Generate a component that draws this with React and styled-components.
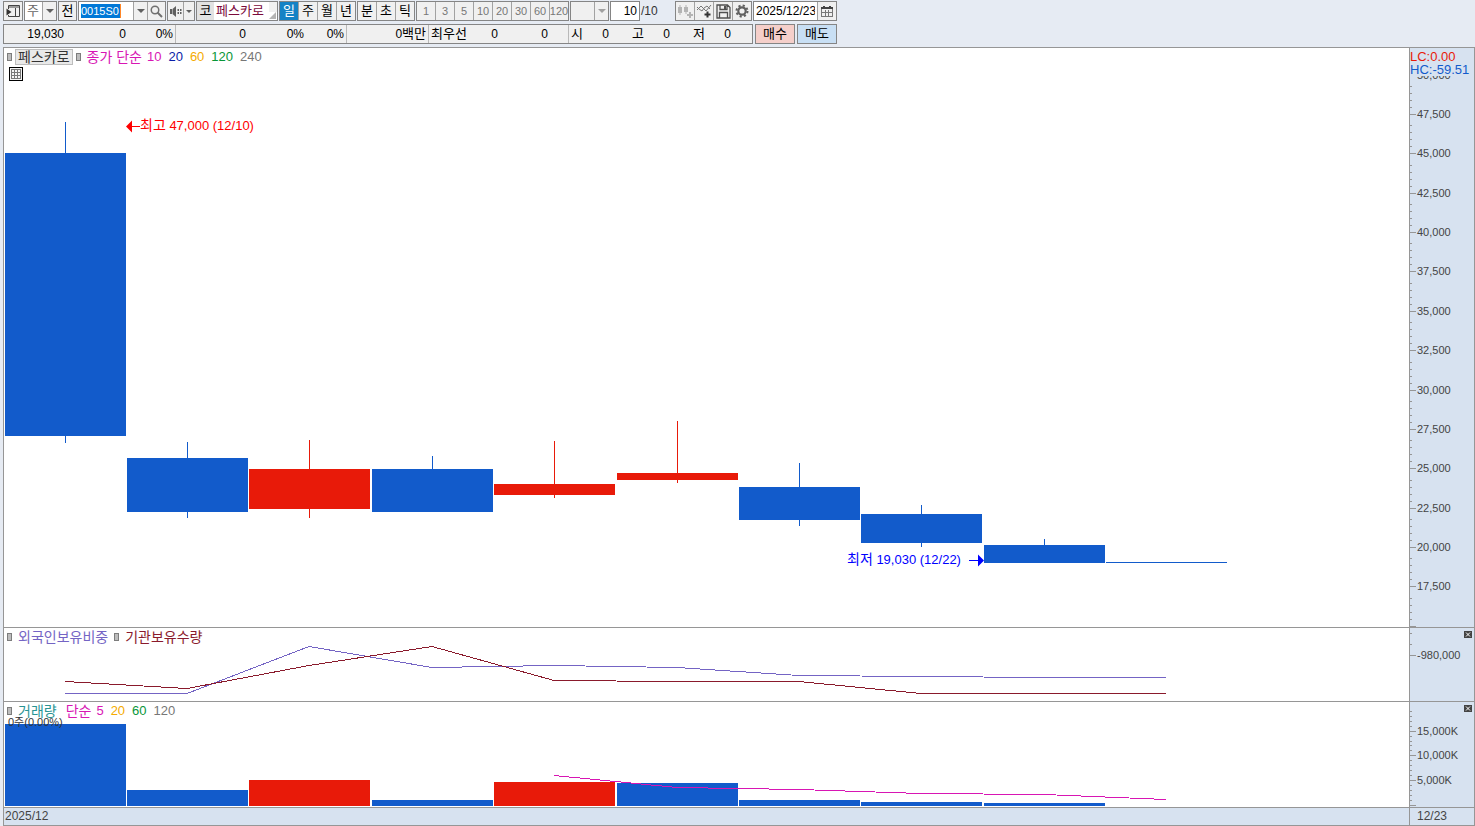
import React from "react";
import styled, { createGlobalStyle } from "styled-components";

const BLUE = "#125bcb";
const RED = "#e81a09";
const LINE = "#969696";

const GlobalStyle = createGlobalStyle`
  body {
    margin: 0;
    background: #e6ebf3;
  }
  * {
    box-sizing: border-box;
  }
  button, input, select {
    margin: 0;
    padding: 0;
    border: 0;
    border-radius: 0;
    outline: 0;
    font: inherit;
    color: inherit;
    background: none;
  }
`;

const Page = styled.div`
  display: flex;
  flex-direction: column;
  gap: 3px;
  padding: 1px 0 0 3px;
  font-family: "Liberation Sans", "Noto Sans CJK KR", sans-serif;
  font-size: 13px;
  line-height: 18px;
  color: #000;
`;
const Toolbar = styled.header`
  display: flex;
  gap: 1px;
  height: 20px;
  white-space: nowrap;
  svg {
    flex-shrink: 0;
  }
`;
const Group = styled.div`
  display: flex;
  flex-shrink: 0;
  border: 1px solid #858585;
  background: #f0f0f0;
  width: ${p => p.$width}px;
`;
const ToolButton = styled.button`
  display: flex;
  align-items: center;
  justify-content: center;
  flex: ${p => (p.$width ? `0 0 ${p.$width}px` : "1 1 0")};
  min-width: 0;
  background: ${p => (p.$active ? "#1582c5" : "transparent")};
  color: ${p => (p.$active ? "#fff" : "inherit")};
  * + & {
    border-left: 1px solid #a2a2a2;
  }
`;
const PeriodButton = styled(ToolButton)`
  font-size: 11px;
  color: #777;
`;
const Field = styled.input`
  flex: 1;
  width: 0;
  min-width: 0;
  padding: 0 2px;
  background: #fff;
  font-size: 12px;
  text-align: ${p => p.$align || "left"};
`;
const CodeBox = styled.div`
  flex: 1;
  padding: 2px;
  background: #fff;
`;
const CodeField = styled.input`
  display: block;
  width: 40px;
  height: 14px;
  font-size: 11px;
  line-height: 14px;
  background: #0078d7;
  color: #fff;
  border-right: 1px solid #ff8728;
`;
const Drop = styled.select`
  flex: 1;
  min-width: 0;
  padding-left: 2px;
  appearance: none;
  background: ${p => p.$bg || "#fff"};
  color: #666;
`;
const DropArrow = styled.span`
  display: flex;
  flex-shrink: 0;
  align-items: center;
  justify-content: center;
  width: ${p => p.$width || 14}px;
  border-left: 1px solid #a2a2a2;
  background: #f0f0f0;
`;
const Market = styled.span`
  width: 17px;
  text-align: center;
  background: #e2e2e2;
`;
const StockName = styled.span`
  flex: 1;
  padding-left: 2px;
  background: #fff;
  color: #7b0a3c;
`;
const Corner = styled.svg`
  align-self: flex-end;
`;
const PageTotal = styled.span`
  width: 33px;
  font-size: 12px;
  line-height: 20px;
  color: #333;
`;

const QuoteRow = styled.section`
  display: flex;
  gap: 2px;
  height: 20px;
  white-space: nowrap;
`;
const Quote = styled.div`
  display: flex;
  border: 1px solid #858585;
  background: #f0f0f0;
  font-size: 12px;
`;
const Cell = styled.span`
  width: ${p => p.$width}px;
  padding: 0 2px;
  text-align: ${p => p.$align || "right"};
  border-right: ${p => (p.$divider ? "1px solid #b9b9b9" : "0")};
`;
const Korean = styled.span`
  font-size: 13px;
`;
const Ohlc = styled.span`
  display: flex;
  justify-content: space-between;
  width: 61px;
  padding: 0 21px 0 2px;
`;
const OrderButton = styled.button`
  width: 40px;
  border: 1px solid #858585;
  background: ${p => p.$bg};
`;

const Frame = styled.main`
  border: 1px solid ${LINE};
  border-bottom: 0;
`;
const Panel = styled.section`
  position: relative;
  display: grid;
  grid-template-columns: 1fr 65px;
  border-bottom: 1px solid ${LINE};
  background: #fff;
`;
const Plot = styled.svg`
  display: block;
  width: 100%;
  height: ${p => p.$height}px;
`;
const Axis = styled.div`
  border-left: 1px solid ${LINE};
  background: #d7e2f0;
`;
const Legend = styled.div`
  position: absolute;
  top: 1px;
  left: 3px;
  display: flex;
  align-items: center;
  gap: 3px;
  height: 16px;
  line-height: 16px;
  white-space: nowrap;
`;
const Marker = styled.span`
  width: 5px;
  height: 8px;
  margin-left: ${p => p.$indent || 0}px;
  border: 1px solid #7d7d7d;
  background: #bdbdbd;
`;
const SymbolButton = styled.button`
  height: 16px;
  padding: 0 2px;
  border: 1px solid #bdbdbd;
  background: #e9e9e9;
  font-size: 14px;
  line-height: 14px;
  color: #333;
`;
const Series = styled.span`
  margin-left: ${p => p.$indent || 0}px;
  font-size: ${p => (p.$korean ? 14 : 13)}px;
  color: ${p => p.$color};
`;
const Periods = styled.span`
  display: flex;
  gap: 7px;
  margin-left: 2px;
`;
const TableButton = styled.button`
  position: absolute;
  top: 19px;
  left: 5px;
  display: flex;
  width: 14px;
  height: 14px;
`;
const CloseButton = styled.button`
  position: absolute;
  top: 3px;
  right: 2px;
  display: flex;
`;
const Change = styled.div`
  position: absolute;
  top: 2px;
  right: 0;
  width: 64px;
  line-height: 13px;
  color: ${RED};
  p {
    margin: 0;
  }
  p + p {
    color: ${BLUE};
    background: #d7e2f0;
  }
`;
const VolumeNote = styled.span`
  position: absolute;
  top: 13px;
  left: 4px;
  font-size: 11px;
  line-height: 14px;
  color: #333;
`;
const Footer = styled.footer`
  display: grid;
  grid-template-columns: 1fr 65px;
  border-bottom: 1px solid ${LINE};
  background: #d7e2f0;
  font-size: 12px;
  line-height: 16px;
  color: #444;
  span {
    height: 17px;
    padding-left: 1px;
  }
  span + span {
    padding-left: 7px;
    border-left: 1px solid ${LINE};
  }
`;

// top/bottom of the body, high/low of the wick, top of the volume bar
const candles = [
  { x: 1, top: 105, bottom: 388, high: 74, low: 395, vol: 22 },
  { x: 123, top: 410, bottom: 464, high: 394, low: 470, vol: 88 },
  { x: 245, top: 421, bottom: 461, high: 392, low: 470, vol: 78, up: true },
  { x: 368, top: 421, bottom: 464, high: 408, low: 464, vol: 98 },
  { x: 490, top: 436, bottom: 447, high: 393, low: 450, vol: 80, up: true },
  { x: 613, top: 425, bottom: 432, high: 373, low: 435, vol: 81, up: true, volDown: true },
  { x: 735, top: 439, bottom: 472, high: 415, low: 478, vol: 98 },
  { x: 857, top: 466, bottom: 495, high: 457, low: 499, vol: 100 },
  { x: 980, top: 497, bottom: 515, high: 491, low: 515, vol: 101 },
  { x: 1102, top: 514, bottom: 515, high: 514, low: 515, vol: 104 }
];

const foreign = [65, 65, 18, 39, 37, 39, 47, 48, 49, 49];
const institution = [53, 60, 37, 18, 52, 53, 53, 65, 65, 65];
const volumeAverage = [73, 85, 87, 91, 92, 97];

const priceLabels = [
  ["50,000", 27],
  ["47,500", 66],
  ["45,000", 105],
  ["42,500", 145],
  ["40,000", 184],
  ["37,500", 223],
  ["35,000", 263],
  ["32,500", 302],
  ["30,000", 342],
  ["27,500", 381],
  ["25,000", 420],
  ["22,500", 460],
  ["20,000", 499],
  ["17,500", 538],
  ["", 578]
];
const ratioLabels = [["-980,000", 27]];
const volumeLabels = [
  ["15,000K", 29],
  ["10,000K", 53],
  ["5,000K", 78],
  ["", 103]
];

const toPoints = (values, from = 0) =>
  values.map((y, i) => `${candles[i + from].x + 60},${y + 0.5}`).join(" ");

function Trend({ values, from, color }) {
  return (
    <polyline
      points={toPoints(values, from)}
      fill="none"
      stroke={color}
      shapeRendering="crispEdges"
    />
  );
}

function Scale({ height, labels, minor }) {
  return (
    <Plot $height={height}>
      {minor.map(y => (
        <rect key={y} x="0" y={y} width="2" height="1" fill={LINE} />
      ))}
      {labels.map(([text, y]) => (
        <g key={y}>
          <rect x="0" y={y} width="6" height="1" fill={LINE} />
          <text x="7" y={y + 4} fontSize="11" fill="#444">
            {text}
          </text>
        </g>
      ))}
    </Plot>
  );
}

function Arrow({ color = "#606060" }) {
  return (
    <svg width="8" height="4" viewBox="0 0 8 4">
      <path d="M0 0h8L4 4z" fill={color} />
    </svg>
  );
}

function Close({ label }) {
  return (
    <CloseButton aria-label={label}>
      <svg width="8" height="7" viewBox="0 0 8 7">
        <rect width="8" height="7" fill="#444" />
        <path d="M2 1.5l4 4M6 1.5l-4 4" stroke="#fff" strokeWidth="1" />
      </svg>
    </CloseButton>
  );
}

function MainToolbar() {
  return (
    <Toolbar>
      <Group $width={20}>
        <ToolButton aria-label="창">
          <svg width="16" height="14" viewBox="0 0 16 14" fill="none">
            <path d="M3.500 5V1.500h11v11h-11V11M3 3h11.500M10.500 4v8" stroke="#444" />
            <path d="M1.500 4.500l5 3.500l-5 3.500z" fill="#333" />
          </svg>
        </ToolButton>
      </Group>
      <Group $width={33}>
        <Drop aria-label="구분" defaultValue="주">
          <option>주</option>
        </Drop>
        <DropArrow>
          <Arrow />
        </DropArrow>
      </Group>
      <Group $width={19}>
        <ToolButton>전</ToolButton>
      </Group>
      <Group $width={88}>
        <CodeBox>
          <CodeField aria-label="종목코드" defaultValue="0015S0" />
        </CodeBox>
        <DropArrow>
          <Arrow />
        </DropArrow>
        <ToolButton $width={18} aria-label="검색">
          <svg width="13" height="13" viewBox="0 0 13 13" fill="none">
            <circle cx="5" cy="5" r="3.750" stroke="#707070" strokeWidth="1.500" />
            <path d="M7.500 7.500l4.500 4.500" stroke="#707070" strokeWidth="2" />
          </svg>
        </ToolButton>
      </Group>
      <Group $width={28}>
        <ToolButton aria-label="소리">
          <svg width="14" height="12" viewBox="0 0 14 12" fill="#606060">
            <path d="M1 4h2v5H1zM3.500 4L7 1v11L3.500 9z" />
            <path d="M8.500 4h1.500v2H8.500zM8.500 7h1.500v2H8.500zM11 4h1.500v2H11zM11 7h1.500v2H11z" />
          </svg>
        </ToolButton>
        <DropArrow $width={11}>
          <svg width="6" height="3" viewBox="0 0 6 3">
            <path d="M0 0h6L3 3z" fill="#606060" />
          </svg>
        </DropArrow>
      </Group>
      <Group $width={82}>
        <Market>코</Market>
        <StockName>페스카로</StockName>
        <Corner width="8" height="8" viewBox="0 0 8 8">
          <rect width="8" height="8" fill="#fff" />
          <path d="M7 0v7H0z" fill="#b4b4b4" />
        </Corner>
      </Group>
      <Group $width={77}>
        <ToolButton $active>일</ToolButton>
        <ToolButton>주</ToolButton>
        <ToolButton>월</ToolButton>
        <ToolButton>년</ToolButton>
      </Group>
      <Group $width={58}>
        <ToolButton>분</ToolButton>
        <ToolButton>초</ToolButton>
        <ToolButton>틱</ToolButton>
      </Group>
      <Group $width={153}>
        {[1, 3, 5, 10, 20, 30, 60, 120].map(n => (
          <PeriodButton key={n}>{n}</PeriodButton>
        ))}
      </Group>
      <Group $width={39}>
        <Drop aria-label="주기" $bg="#f0f0f0" disabled />
        <DropArrow>
          <Arrow color="#a0a0a0" />
        </DropArrow>
      </Group>
      <Group $width={30}>
        <Field aria-label="표시 개수" $align="right" defaultValue="10" />
      </Group>
      <PageTotal>/10</PageTotal>
      <Group $width={77}>
        <ToolButton aria-label="봉 추가">
          <svg width="16" height="16" viewBox="0 0 16 16" fill="#b4b4b4">
            <path d="M1 4h4v6H1zM2.500 2h1v10h-1zM7 4h4v5H7zM8.500 2h1v9h-1zM12 9h2v2h2v2h-2v2h-2v-2h-2v-2h2z" />
          </svg>
        </ToolButton>
        <ToolButton aria-label="지표 추가">
          <svg width="16" height="16" viewBox="0 0 16 16" fill="none">
            <path d="M1 7l4-4l5 5l5-6M1 4l2 2l3 2l2-3l3-2l3 3" stroke="#777" />
            <path d="M11.500 8.500v6M8.500 11.500h6" stroke="#333" strokeWidth="2" />
          </svg>
        </ToolButton>
        <ToolButton aria-label="저장">
          <svg width="15" height="15" viewBox="0 0 15 15" fill="none">
            <path d="M1 1h10.500L14 3.500V14H1zM4 1v4.500h7V1M3.500 14V8.500h8V14" stroke="#505050" strokeWidth="1.300" />
            <path d="M8 2h2v3H8z" fill="#505050" />
          </svg>
        </ToolButton>
        <ToolButton aria-label="설정">
          <svg width="14" height="14" viewBox="0 0 14 14" fill="none">
            <circle cx="7" cy="7" r="3.700" stroke="#606060" strokeWidth="2.200" />
            <circle cx="7" cy="7" r="5.500" stroke="#606060" strokeWidth="2" strokeDasharray="2.160 2.160" />
          </svg>
        </ToolButton>
      </Group>
      <Group $width={84}>
        <Field aria-label="날짜" defaultValue="2025/12/23" />
        <ToolButton $width={19} aria-label="달력">
          <svg width="12" height="11" viewBox="0 0 12 11" fill="none" shapeRendering="crispEdges">
            <path d="M.5 1.500h11v9H.5zM1 6.500h10M4.500 4v6M7.500 4v6" stroke="#777" />
            <path d="M0 1h12v2H0zM2 0h2v1H2zM8 0h2v1H8z" fill="#444" />
          </svg>
        </ToolButton>
      </Group>
    </Toolbar>
  );
}

function QuoteBar() {
  return (
    <QuoteRow>
      <Quote>
        <Cell $width={62}>19,030</Cell>
        <Cell $width={62}>0</Cell>
        <Cell $width={48} $divider>0%</Cell>
        <Cell $width={72}>0</Cell>
        <Cell $width={58}>0%</Cell>
        <Cell $width={41} $divider>0%</Cell>
        <Cell $width={82} $divider>0<Korean>백만</Korean></Cell>
        <Cell $width={40} $align="left"><Korean>최우선</Korean></Cell>
        <Cell $width={31}>0</Cell>
        <Cell $width={50}>0</Cell>
        <Cell $width={19} $divider />
        <Ohlc><Korean>시</Korean><span>0</span></Ohlc>
        <Ohlc><Korean>고</Korean><span>0</span></Ohlc>
        <Ohlc><Korean>저</Korean><span>0</span></Ohlc>
      </Quote>
      <OrderButton $bg="#f5cfca">매수</OrderButton>
      <OrderButton $bg="#c8dff4">매도</OrderButton>
    </QuoteRow>
  );
}

function PricePanel() {
  const majors = priceLabels.slice(1).map(([, y]) => y);
  const minor = majors.flatMap(y => [y - 28, y - 21, y - 14, y - 7]);
  return (
    <Panel>
      <Plot $height={579}>
        {candles.map(c => (
          <g key={c.x} fill={c.up ? RED : BLUE}>
            <rect x={c.x + 60} y={c.high} width="1" height={c.low - c.high} />
            <rect x={c.x} y={c.top} width="121" height={c.bottom - c.top} />
          </g>
        ))}
        <g fill="#f00">
          <path d="M122 78.500l6-6v12zM128 78h8v1h-8z" />
          <text x="136" y="82" fontSize="13">
            <tspan fontSize="14">최고</tspan> 47,000 (12/10)
          </text>
        </g>
        <g fill="#00f">
          <path d="M980 512.500l-6-6v12zM965 512h9v1h-9z" />
          <text x="843" y="516" fontSize="13">
            <tspan fontSize="14">최저</tspan> 19,030 (12/22)
          </text>
        </g>
      </Plot>
      <Axis>
        <Scale height={579} labels={priceLabels} minor={minor} />
      </Axis>
      <Legend>
        <Marker />
        <SymbolButton>페스카로</SymbolButton>
        <Marker />
        <Series $korean $indent={3} $color="#d816b4">종가 단순</Series>
        <Periods>
          <Series $color="#d816b4">10</Series>
          <Series $color="#0a1ea8">20</Series>
          <Series $color="#f5ab00">60</Series>
          <Series $color="#089638">120</Series>
          <Series $color="#777">240</Series>
        </Periods>
      </Legend>
      <TableButton aria-label="데이터 표">
        <svg width="14" height="14" viewBox="0 0 14 14" fill="none" shapeRendering="crispEdges">
          <path d="M.5 .5h13v13H.5z" stroke="#000" fill="#f4f4f4" />
          <path d="M2.500 2.500h9v9h-9zM3 5.500h9M3 8.500h9M5.500 3v9M8.500 3v9" stroke="#777" />
        </svg>
      </TableButton>
      <Change>
        <p>LC:0.00</p>
        <p>HC:-59.51</p>
      </Change>
    </Panel>
  );
}

function HoldingPanel() {
  return (
    <Panel>
      <Plot $height={73}>
        <Trend values={foreign} color="#7464c4" />
        <Trend values={institution} color="#8a1a2c" />
      </Plot>
      <Axis>
        <Scale height={73} labels={ratioLabels} minor={[5, 16]} />
      </Axis>
      <Legend>
        <Marker />
        <Series $korean $indent={3} $color="#7464c4">외국인보유비중</Series>
        <Marker $indent={3} />
        <Series $korean $indent={3} $color="#8a1a2c">기관보유수량</Series>
      </Legend>
      <Close label="보유 지표 닫기" />
    </Panel>
  );
}

function VolumePanel() {
  const minor = [9, 14, 19, 24, 34, 39, 43, 48, 58, 63, 68, 73, 83, 88, 93, 98];
  return (
    <Panel>
      <Plot $height={105}>
        {candles.map(c => (
          <rect
            key={c.x}
            x={c.x}
            y={c.vol}
            width="121"
            height={104 - c.vol}
            fill={c.up && !c.volDown ? RED : BLUE}
          />
        ))}
        <Trend values={volumeAverage} from={4} color="#d816b4" />
      </Plot>
      <Axis>
        <Scale height={105} labels={volumeLabels} minor={minor} />
      </Axis>
      <Legend>
        <Marker />
        <Series $korean $indent={3} $color="#2a9494">거래량</Series>
        <Series $korean $indent={6} $color="#d816b4">단순</Series>
        <Periods>
          <Series $color="#d816b4">5</Series>
          <Series $color="#f5ab00">20</Series>
          <Series $color="#089638">60</Series>
          <Series $color="#777">120</Series>
        </Periods>
      </Legend>
      <VolumeNote>0주(0.00%)</VolumeNote>
      <Close label="거래량 닫기" />
    </Panel>
  );
}

export default function App() {
  return (
    <Page>
      <GlobalStyle />
      <MainToolbar />
      <QuoteBar />
      <Frame>
        <PricePanel />
        <HoldingPanel />
        <VolumePanel />
        <Footer>
          <span>2025/12</span>
          <span>12/23</span>
        </Footer>
      </Frame>
    </Page>
  );
}
